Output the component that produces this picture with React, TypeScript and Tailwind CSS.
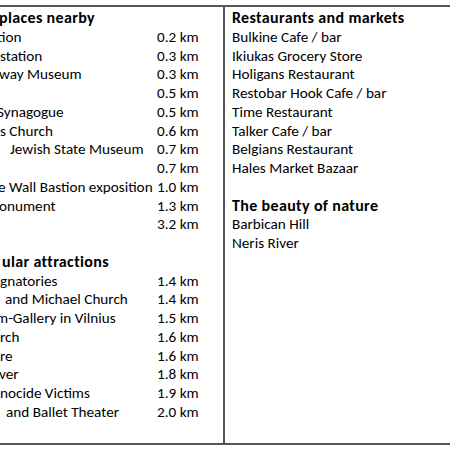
import React from "react";

const font = { fontFamily: "Carlito, Lato, 'Liberation Sans', sans-serif" };

type Row = { t: string; ml: number; km?: string; bold?: boolean };

const left: Row[] = [
  { t: "places nearby", ml: -1, bold: true },
  { t: "tion", ml: -3, km: "0.2 km" },
  { t: "station", ml: 0, km: "0.3 km" },
  { t: "way Museum", ml: -1, km: "0.3 km" },
  { t: "", ml: 0, km: "0.5 km" },
  { t: "Synagogue", ml: -3, km: "0.5 km" },
  { t: "s Church", ml: 0, km: "0.6 km" },
  { t: "Jewish State Museum", ml: 10, km: "0.7 km" },
  { t: "", ml: 0, km: "0.7 km" },
  { t: "e Wall Bastion exposition", ml: -2, km: "1.0 km" },
  { t: "onument", ml: -1, km: "1.3 km" },
  { t: "", ml: 0, km: "3.2 km" },
  { t: "", ml: 0 },
  { t: "ular attractions", ml: 2, bold: true },
  { t: "gnatories", ml: 0, km: "1.4 km" },
  { t: "and Michael Church", ml: 5, km: "1.4 km" },
  { t: "m-Gallery in Vilnius", ml: -4, km: "1.5 km" },
  { t: "rch", ml: 0, km: "1.6 km" },
  { t: "re", ml: 0, km: "1.6 km" },
  { t: "ver", ml: -1, km: "1.8 km" },
  { t: "nocide Victims", ml: 0, km: "1.9 km" },
  { t: "and Ballet Theater", ml: 6, km: "2.0 km" },
];

const right: { t: string; bold?: boolean }[] = [
  { t: "Restaurants and markets", bold: true },
  { t: "Bulkine Cafe / bar" },
  { t: "Ikiukas Grocery Store" },
  { t: "Holigans Restaurant" },
  { t: "Restobar Hook Cafe / bar" },
  { t: "Time Restaurant" },
  { t: "Talker Cafe / bar" },
  { t: "Belgians Restaurant" },
  { t: "Hales Market Bazaar" },
  { t: "" },
  { t: "The beauty of nature", bold: true },
  { t: "Barbican Hill" },
  { t: "Neris River" },
];

const boldCls = "font-bold text-[16px] tracking-[0.35px]";

export default function App() {
  return (
    <div
      className="w-[450px] h-[450px] bg-white overflow-hidden pt-[5px] text-[15.2px] leading-[18.75px] text-black"
      style={font}
    >
      <div className="flex w-[470px] h-[440px] border-t-2 border-b-2 border-[#555]">
        <div className="w-[225px] shrink-0 border-r-2 border-[#555] pt-[2px]">
          {left.map((r, i) => (
            <div key={i} className="flex h-[18.75px]">
              <div className="w-[157px] shrink-0 overflow-hidden whitespace-nowrap">
                <span
                  className={r.bold ? `${boldCls} inline-block` : "inline-block"}
                  style={{ marginLeft: r.ml }}
                >
                  {r.t || "\u00a0"}
                </span>
              </div>
              <div className="whitespace-nowrap">{r.km || ""}</div>
            </div>
          ))}
        </div>
        <div className="pl-[7px] pt-[2px]">
          {right.map((r, i) => (
            <div
              key={i}
              className={
                r.bold
                  ? `h-[18.75px] whitespace-nowrap ${boldCls}`
                  : "h-[18.75px] whitespace-nowrap"
              }
            >
              {r.t || "\u00a0"}
            </div>
          ))}
        </div>
      </div>
    </div>
  );
}
